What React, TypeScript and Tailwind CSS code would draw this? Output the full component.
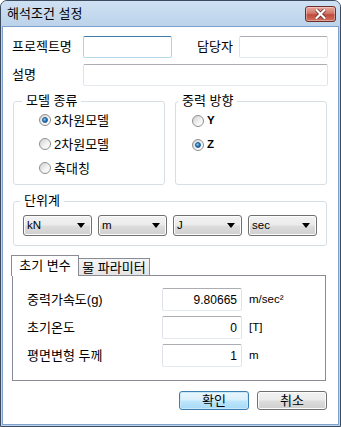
import React from "react";

const FONT = { fontFamily: '"Liberation Sans", "Noto Sans CJK KR", sans-serif' };

function TextBox({ w, h = 22, focused = false, value = "", right = false }: { w: number; h?: number; focused?: boolean; value?: string; right?: boolean }) {
  return (
    <div
      className={
        "box-border rounded-[2px] border bg-white flex items-center text-[12px] text-black px-[4px] " +
        (focused
          ? "border-t-[#3d7bad] border-x-[#b5cfe7] border-b-[#b7d9ed]"
          : "border-t-[#abadb3] border-x-[#e2e3ea] border-b-[#e3e9ef]") +
        (right ? " justify-end" : "")
      }
      style={{ width: w, height: h }}
    >
      {value}
    </div>
  );
}

function Radio({ checked, label, latin }: { checked?: boolean; label: string; latin?: boolean }) {
  return (
    <div className="flex items-center gap-[3px] h-[24px]">
      <span className="relative w-[12px] h-[12px] rounded-full border border-[#8e8f8f] bg-[linear-gradient(135deg,#d0d0d0,#f4f4f4_60%,#ffffff)] flex items-center justify-center">
        {checked && (
          <span className="w-[6px] h-[6px] rounded-full bg-[radial-gradient(circle_at_35%_35%,#8fd1f5,#1f6fb0_60%,#0f4e8a)] border border-[#1b5a96]" />
        )}
      </span>
      <span className={(latin ? "text-[11.5px] font-bold" : "text-[13px]") + " leading-none text-black"}>{label}</span>
    </div>
  );
}

function Select({ label }: { label: string }) {
  return (
    <div className="box-border w-[69px] h-[21px] rounded-[3px] border border-[#707070] bg-[linear-gradient(#f2f2f2_0%,#ebebeb_48%,#dddddd_52%,#cfcfcf_100%)] flex items-center justify-between pl-[3px] pr-[6px] shadow-[inset_0_0_0_1px_#fcfcfc]">
      <span className="text-[11.5px] text-black leading-none">{label}</span>
      <svg width="8" height="5" viewBox="0 0 8 5"><path d="M0 0 H8 L4 5 Z" fill="#000" /></svg>
    </div>
  );
}

function GroupBox({ title, titleLeft, width, height, children, className = "" }: { title: string; titleLeft: number; width: number; height: number; children?: React.ReactNode; className?: string }) {
  return (
    <div className={"relative box-border rounded-[3px] border border-[#d5dfe5] " + className} style={{ width, height }}>
      <span className="absolute top-[-10px] bg-white px-[4px] text-[13px] leading-[18px] text-black" style={{ left: titleLeft }}>
        {title}
      </span>
      {children}
    </div>
  );
}

export default function App() {
  return (
    <div className="w-[341px] h-[427px] overflow-hidden" style={FONT}>
      <div className="box-border w-[341px] h-[427px] rounded-t-[7px] border border-[#3c4b5e] bg-[#bfd4eb] flex flex-col">
        {/* title bar */}
        <div className="h-[25px] shrink-0 rounded-t-[6px] bg-[linear-gradient(#cfe0f3,#bcd3ea)] flex items-start justify-between">
          <span className="pl-[6px] pt-[5px] text-[13px] leading-[16px] text-black">해석조건 설정</span>
          <div className="mt-[5px] mr-[4px] w-[31px] h-[16px] rounded-[3px] border border-[#6b2e2a] bg-[linear-gradient(#e8a89c,#d3776a_45%,#c04b3b_55%,#d27260)] flex items-center justify-center shadow-[inset_0_0_0_1px_rgba(255,255,255,0.35)]">
            <svg width="11" height="10" viewBox="0 0 11 10">
              <path d="M1.5 1 L9.5 9 M9.5 1 L1.5 9" stroke="#5a2a26" strokeWidth="3.6" strokeLinecap="square" />
              <path d="M1.5 1 L9.5 9 M9.5 1 L1.5 9" stroke="#ffffff" strokeWidth="2.2" strokeLinecap="square" />
            </svg>
          </div>
        </div>
        {/* content */}
        <div className="flex-1 mx-px mb-px border border-[#7da2ce] bg-white text-[13px] text-black">
          {/* row 1 */}
          <div className="flex items-center pt-[9px] pl-[9px]">
            <span className="w-[71px]">프로젝트명</span>
            <TextBox w={89} focused />
            <span className="ml-[25px] w-[42px]">담당자</span>
            <TextBox w={89} />
          </div>
          {/* row 2 */}
          <div className="flex items-center mt-[6px] pl-[9px]">
            <span className="w-[71px]">설명</span>
            <TextBox w={245} />
          </div>
          {/* group boxes */}
          <div className="flex gap-[10px] mt-[15px] ml-[10px]">
            <GroupBox title="모델 종류" titleLeft={8} width={152} height={84}>
              <div className="flex flex-col pt-[6px] pl-[25px]">
                <Radio checked label="3차원모델" />
                <Radio label="2차원모델" />
                <Radio label="축대칭" />
              </div>
            </GroupBox>
            <GroupBox title="중력 방향" titleLeft={2} width={152} height={84}>
              <div className="flex flex-col pt-[7px] pl-[16px]">
                <Radio label="Y" latin />
                <Radio checked label="Z" latin />
              </div>
            </GroupBox>
          </div>
          {/* units */}
          <div className="mt-[16px] ml-[10px]">
            <GroupBox title="단위계" titleLeft={6} width={314} height={45}>
              <div className="flex gap-[6px] pt-[13px] pl-[9px]">
                <Select label="kN" />
                <Select label="m" />
                <Select label="J" />
                <Select label="sec" />
              </div>
            </GroupBox>
          </div>
          {/* tabs */}
          <div className="mt-[9px] ml-[8px]">
            <div className="flex items-end h-[20px]">
              <div className="relative z-10 box-border w-[68px] h-[21px] mb-[-1px] border border-b-0 border-[#898c95] bg-white flex items-center justify-center pb-[1px] leading-none">
                초기 변수
              </div>
              <div className="box-border -ml-px w-[72px] h-[17px] border border-b-0 border-[#898c95] bg-[linear-gradient(#f5f5f5,#e4e4e4)] flex items-center justify-center leading-none">
                물 파라미터
              </div>
            </div>
            <div className="box-border ml-px w-[314px] h-[106px] border border-[#898c95] bg-white pt-[12px] pl-[14px] flex flex-col gap-[5px]">
              <div className="flex items-center h-[23px]">
                <span className="w-[135px]">중력가속도(g)</span>
                <TextBox w={80} h={23} right value="9.80665" />
                <span className="ml-[7px] text-[11.5px]">m/sec²</span>
              </div>
              <div className="flex items-center h-[23px]">
                <span className="w-[135px]">초기온도</span>
                <TextBox w={80} h={23} right value="0" />
                <span className="ml-[7px] text-[11.5px]">[T]</span>
              </div>
              <div className="flex items-center h-[23px]">
                <span className="w-[135px]">평면변형 두께</span>
                <TextBox w={80} h={23} right value="1" />
                <span className="ml-[7px] text-[11.5px]">m</span>
              </div>
            </div>
          </div>
          {/* buttons */}
          <div className="flex justify-end gap-[8px] mt-[10px] pr-[11px]">
            <div className="box-border w-[70px] h-[19px] rounded-[3px] border border-[#3c7fb1] bg-[linear-gradient(#eaf6fd_0%,#d9f0fc_48%,#bee6fd_52%,#a7d9f5_100%)] shadow-[inset_0_0_0_1px_#c9e9fb] flex items-center justify-center leading-none">
              확인
            </div>
            <div className="box-border w-[70px] h-[19px] rounded-[3px] border border-[#707070] bg-[linear-gradient(#f2f2f2_0%,#ebebeb_48%,#dddddd_52%,#cfcfcf_100%)] shadow-[inset_0_0_0_1px_#fcfcfc] flex items-center justify-center leading-none">
              취소
            </div>
          </div>
        </div>
      </div>
    </div>
  );
}
